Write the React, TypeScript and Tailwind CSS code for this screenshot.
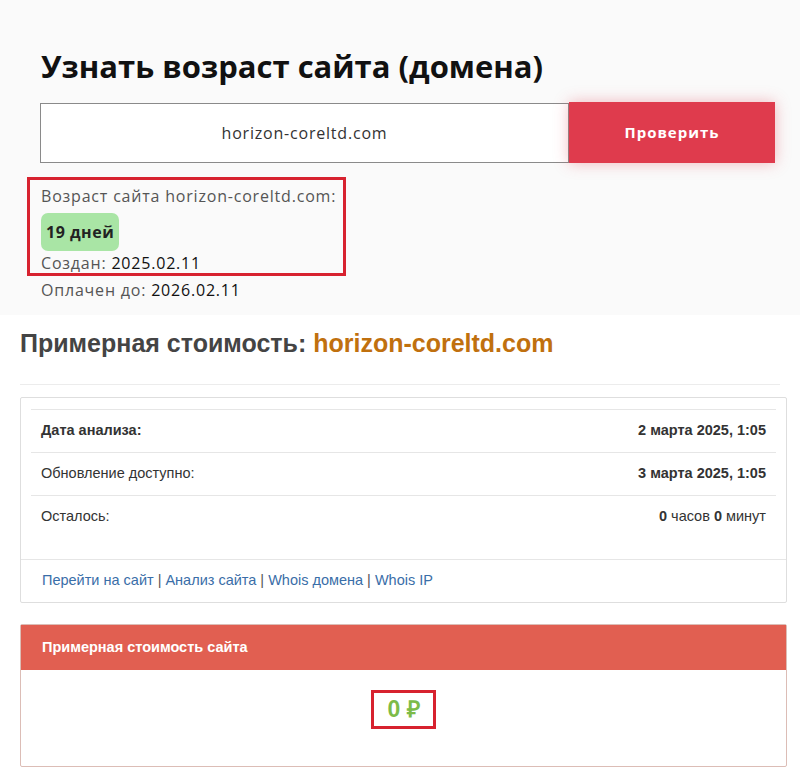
import React from 'react';

const MONT = "font-['Open_Sans','Noto_Sans',sans-serif]";
const ARIAL = "font-['Liberation_Sans',Arial,sans-serif]";

function AgeChecker() {
  return (
    <section className={`bg-[#fafafa] h-[315px] pt-[44px] ${MONT}`}>
      <h1 className="ml-[41px] text-[31px] leading-[44px] font-bold text-[#111]">
        Узнать возраст сайта (домена)
      </h1>
      <div className="flex ml-[40px] mt-[14px] w-[735px] h-[61px]">
        <div className="flex-1 h-[60px] mt-[1px] bg-white border border-[#8a8a8a] flex items-center justify-center text-[16px] tracking-[0.8px] text-[#333]">
          horizon-coreltd.com
        </div>
        <button className="w-[206px] h-[61px] bg-[#df3b4d] text-white text-[15px] tracking-[1px] font-bold shadow-[0_0_14px_rgba(223,59,77,0.35)]">
          Проверить
        </button>
      </div>
      <div className="ml-[27px] mt-[14px] w-[319px] h-[99px] border-[3px] border-[#d7222f] pl-[11px] pt-[3px] text-[16px] tracking-[0.8px] text-[#555]">
        <div className="leading-[26px]">Возраст сайта horizon-coreltd.com:</div>
        <div className="mt-[4px] inline-flex items-center h-[38px] px-[5px] rounded-[7px] bg-[#a9e5a5] text-[#222] font-bold tracking-[0.5px]">
          19 дней
        </div>
        <div className="leading-[26px] mt-[-1px]">
          Создан: <span className="text-[#111]">2025.02.11</span>
        </div>
      </div>
      <div className="ml-[41px] mt-[1px] leading-[26px] text-[16px] tracking-[0.8px] text-[#555]">
        Оплачен до: <span className="text-[#111]">2026.02.11</span>
      </div>
    </section>
  );
}

function Row({ label, value, bold }: { label: string; value: React.ReactNode; bold?: boolean }) {
  return (
    <div className="flex justify-between items-center h-[43px] px-[10px] border-t border-[#e6e6e6]">
      <span className={bold ? 'font-bold' : ''}>{label}</span>
      <span>{value}</span>
    </div>
  );
}

function Estimate() {
  return (
    <section className={`bg-white px-[20px] pb-[15px] ${ARIAL}`}>
      <h2 className="pt-[14px] h-[70px] text-[25px] font-bold text-[#444] leading-[28px] border-b border-[#ececec]">
        Примерная стоимость: <span className="text-[#c0700e]">horizon-coreltd.com</span>
      </h2>
      <div className="mt-[12px] w-[767px] border border-[#dedede] rounded-[2px] text-[14.5px] text-[#333]">
        <div className="px-[10px] pt-[11px] pb-[21px]">
          <Row label="Дата анализа:" value={<b>2 марта 2025, 1:05</b>} bold />
          <Row label="Обновление доступно:" value={<b>3 марта 2025, 1:05</b>} />
          <Row label="Осталось:" value={<><b>0</b> часов <b>0</b> минут</>} />
        </div>
        <div className="h-[43px] border-t border-[#e6e6e6] flex items-center px-[21px] text-[#3a6ea8]">
          <span>Перейти на сайт</span>
          <span className="text-[#555] mx-[4px]">|</span>
          <span>Анализ сайта</span>
          <span className="text-[#555] mx-[4px]">|</span>
          <span>Whois домена</span>
          <span className="text-[#555] mx-[4px]">|</span>
          <span>Whois IP</span>
        </div>
      </div>
      <div className="mt-[21px] w-[767px] border border-[#dcbdb6] rounded-[2px]">
        <div className="h-[45px] bg-[#e15f51] flex items-center px-[21px] text-white text-[14.5px] font-bold">
          Примерная стоимость сайта
        </div>
        <div className="h-[96px] flex justify-center pt-[20px]">
          <div className="border-[3px] border-[#d7222f] w-[65px] h-[39px] flex items-center justify-center text-[23px] font-bold text-[#7dbb48]">
            0 ₽
          </div>
        </div>
      </div>
    </section>
  );
}

export default function App() {
  return (
    <div className="w-[800px] h-[782px] bg-white overflow-hidden">
      <AgeChecker />
      <Estimate />
    </div>
  );
}
